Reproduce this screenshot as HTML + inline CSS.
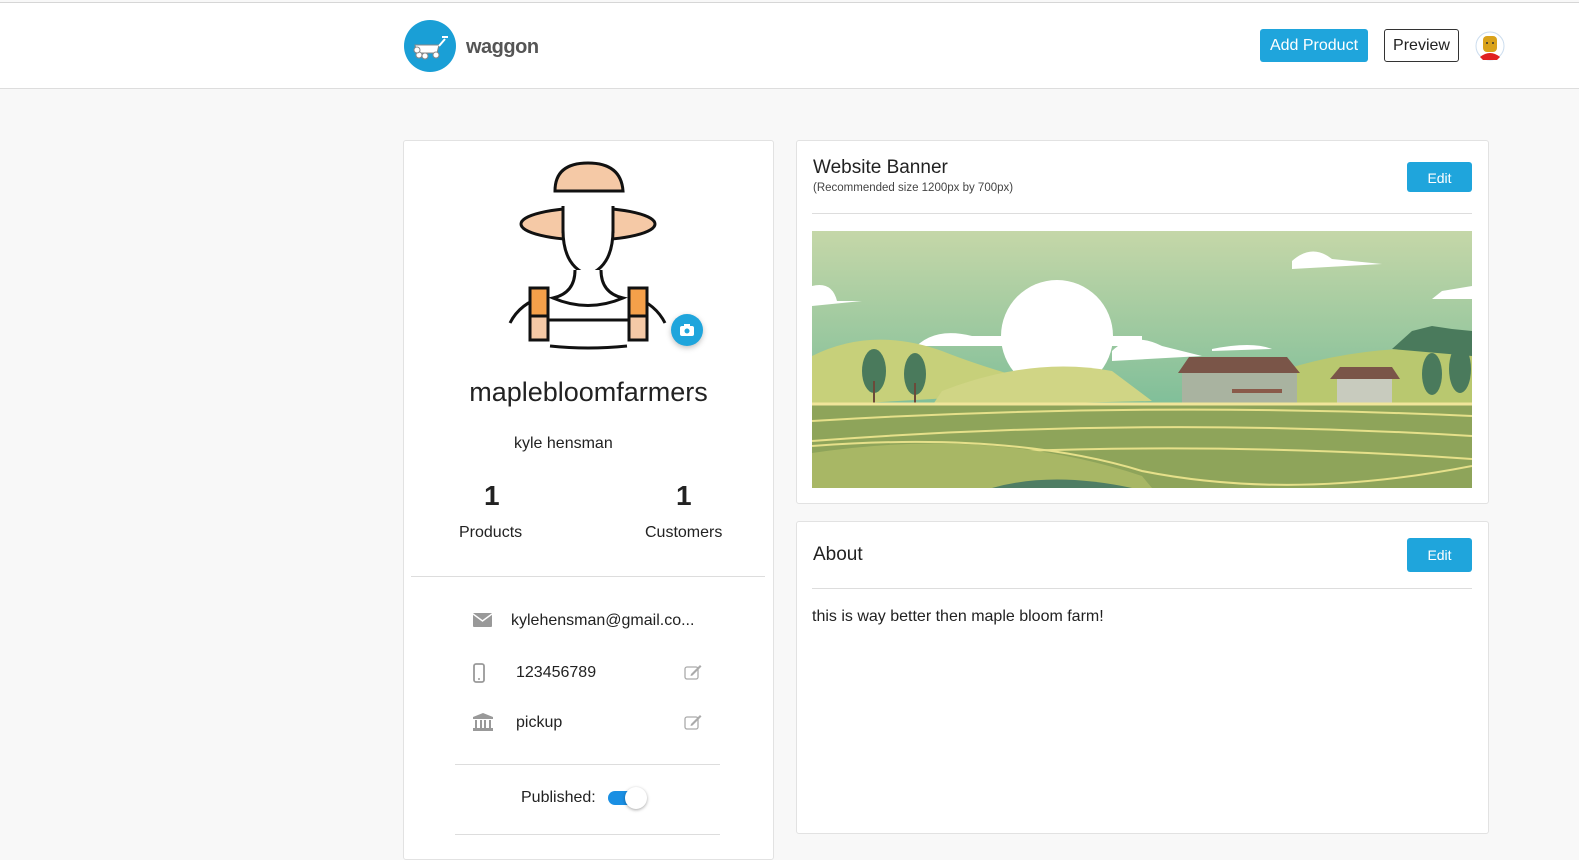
<!DOCTYPE html>
<html><head><style>
*{box-sizing:border-box;margin:0;padding:0}
body{width:1579px;height:847px;overflow:hidden;background:#f8f8f8;font-family:"Liberation Sans",sans-serif;color:#222;position:relative}
.abs{position:absolute}
.hdr{left:0;top:2px;width:1579px;height:87px;background:#fff;border-top:1px solid #d6d6d6;border-bottom:1px solid #ddd}
.card{background:#fff;border:1px solid #e2e2e2;border-radius:3px}
.btn{background:#1fa5dc;color:#fff;border-radius:3px;text-align:center}
.t{white-space:nowrap}
</style></head><body>
<div class="abs hdr"></div>
<svg class="abs" style="left:403px;top:19px" width="54" height="54" viewBox="0 0 54 54">
<circle cx="27" cy="27" r="26" fill="#1a9fd6"/>
<path d="M12 26 L36 26 L34 34 L14 34 Z" fill="#fff" stroke="#888" stroke-width="1"/>
<path d="M36 27 L42 20 M39 18 L45 18" stroke="#fff" stroke-width="2"/>
<circle cx="16" cy="36" r="3" fill="#fff" stroke="#888"/><circle cx="22" cy="37" r="3" fill="#fff" stroke="#888"/>
<circle cx="33" cy="36" r="3" fill="#fff" stroke="#888"/><circle cx="14" cy="31" r="3" fill="#fff" stroke="#888"/>
</svg>
<div class="abs t" style="left:466px;top:36px;font-size:20px;font-weight:bold;color:#555;letter-spacing:-0.5px">waggon</div>
<div class="abs btn t" style="left:1260px;top:29px;width:108px;height:33px;line-height:33px;font-size:16px">Add Product</div>
<div class="abs t" style="left:1384px;top:29px;width:75px;height:33px;line-height:31px;font-size:16px;border:1px solid #333;border-radius:3px;text-align:center">Preview</div>
<svg class="abs" style="left:1475px;top:31px" width="30" height="30" viewBox="0 0 30 30">
<circle cx="15" cy="15" r="14" fill="#fff" stroke="#cde" stroke-width="1"/>
<path d="M5 26 Q15 18 25 26 L22 29 L8 29 Z" fill="#e02020"/>
<rect x="8" y="5" width="14" height="16" rx="4" fill="#d9a21b"/>
<circle cx="12" cy="12" r="1" fill="#333"/><circle cx="18" cy="12" r="1" fill="#333"/>
</svg>

<div class="abs card" style="left:403px;top:140px;width:371px;height:720px"></div>
<svg class="abs" style="left:505px;top:158px" width="170" height="195" viewBox="0 0 170 195">
<path d="M50 33 Q50 5 83 5 Q116 5 118 33 Z" fill="#f5c9a6" stroke="#111" stroke-width="3"/>
<ellipse cx="83" cy="66" rx="67" ry="16" fill="#f5c9a6" stroke="#111" stroke-width="3"/>
<path d="M58 50 L108 50 L108 72 Q108 108 83 117 Q58 108 58 72 Z" fill="#fff" stroke="#111" stroke-width="3"/>
<rect x="58" y="48" width="50" height="10" fill="#fff"/>
<path d="M58 48 L58 75 M108 48 L108 75" stroke="#111" stroke-width="3"/>
<path d="M70 112 Q70 135 48 140 Q83 155 118 140 Q96 135 96 112" fill="#fff" stroke="#111" stroke-width="3"/>
<path d="M5 165 Q15 145 40 138 M160 165 Q150 145 126 138" fill="none" stroke="#111" stroke-width="3"/>
<rect x="25" y="130" width="18" height="52" fill="#f5a04a" stroke="#111" stroke-width="3"/>
<rect x="25" y="158" width="18" height="24" fill="#f5c9a6" stroke="#111" stroke-width="3"/>
<rect x="124" y="130" width="18" height="52" fill="#f5a04a" stroke="#111" stroke-width="3"/>
<rect x="124" y="158" width="18" height="24" fill="#f5c9a6" stroke="#111" stroke-width="3"/>
<path d="M43 162 L124 162" stroke="#111" stroke-width="3"/>
<path d="M45 188 Q83 192 122 188" stroke="#111" stroke-width="3" fill="none"/>
</svg>
<div class="abs" style="left:671px;top:314px;width:32px;height:32px;border-radius:50%;background:#1fa5dc;box-shadow:0 2px 6px rgba(0,0,0,.25)"></div>
<svg class="abs" style="left:679px;top:322px" width="16" height="16" viewBox="0 0 16 16"><rect x="1" y="4" width="14" height="10" rx="2" fill="#fff"/><rect x="5" y="2" width="6" height="3" fill="#fff"/><circle cx="8" cy="9" r="2.5" fill="#1fa5dc"/></svg>
<div class="abs t" style="left:403px;top:377px;width:371px;text-align:center;font-size:27px;color:#222">maplebloomfarmers</div>
<div class="abs t" style="left:514px;top:435px;font-size:16px">kyle hensman</div>
<div class="abs t" style="left:484px;top:480px;font-size:28px;font-weight:bold">1</div>
<div class="abs t" style="left:676px;top:480px;font-size:28px;font-weight:bold">1</div>
<div class="abs t" style="left:459px;top:524px;font-size:16px">Products</div>
<div class="abs t" style="left:645px;top:524px;font-size:16px">Customers</div>
<div class="abs" style="left:411px;top:576px;width:354px;height:1px;background:#ddd"></div>
<svg class="abs" style="left:473px;top:613px" width="19" height="14" viewBox="0 0 19 14"><rect width="19" height="14" rx="1" fill="#999"/><path d="M0 1 L9.5 8 L19 1" fill="none" stroke="#fff" stroke-width="1.5"/></svg>
<div class="abs t" style="left:511px;top:612px;font-size:16px">kylehensman@gmail.co...</div>
<svg class="abs" style="left:473px;top:663px" width="12" height="20" viewBox="0 0 12 20"><rect x="1" y="1" width="10" height="18" rx="2" fill="none" stroke="#999" stroke-width="1.8"/><circle cx="6" cy="16" r="1" fill="#999"/></svg>
<div class="abs t" style="left:516px;top:664px;font-size:16px">123456789</div>
<svg class="abs" style="left:473px;top:713px" width="20" height="18" viewBox="0 0 20 18"><path d="M10 0 L20 4 L0 4 Z" fill="#999"/><rect x="0" y="4" width="20" height="2" fill="#999"/><rect x="2" y="7" width="2" height="8" fill="#999"/><rect x="7" y="7" width="2" height="8" fill="#999"/><rect x="11" y="7" width="2" height="8" fill="#999"/><rect x="16" y="7" width="2" height="8" fill="#999"/><rect x="0" y="15" width="20" height="3" fill="#999"/></svg>
<div class="abs t" style="left:516px;top:714px;font-size:16px">pickup</div>
<svg class="abs" style="left:684px;top:664px" width="18" height="16" viewBox="0 0 18 16"><rect x="1" y="3" width="13" height="12" rx="2" fill="none" stroke="#aaa" stroke-width="1.3"/><path d="M7 10 L16 1 L17.5 2.5 L8.5 11.5 L6.5 12 Z" fill="#aaa"/></svg>
<svg class="abs" style="left:684px;top:714px" width="18" height="16" viewBox="0 0 18 16"><rect x="1" y="3" width="13" height="12" rx="2" fill="none" stroke="#aaa" stroke-width="1.3"/><path d="M7 10 L16 1 L17.5 2.5 L8.5 11.5 L6.5 12 Z" fill="#aaa"/></svg>
<div class="abs" style="left:455px;top:764px;width:265px;height:1px;background:#ddd"></div>
<div class="abs t" style="left:521px;top:789px;font-size:16px">Published:</div>
<div class="abs" style="left:608px;top:791px;width:30px;height:14px;border-radius:7px;background:#1a8fe3"></div>
<div class="abs" style="left:625px;top:787px;width:22px;height:22px;border-radius:50%;background:#fff;box-shadow:0 1px 3px rgba(0,0,0,.35)"></div>
<div class="abs" style="left:455px;top:834px;width:265px;height:1px;background:#ddd"></div>

<div class="abs card" style="left:796px;top:140px;width:693px;height:364px"></div>
<div class="abs t" style="left:813px;top:157px;font-size:19px;color:#222">Website Banner</div>
<div class="abs t" style="left:813px;top:182px;font-size:11.5px;color:#444">(Recommended size 1200px by 700px)</div>
<div class="abs btn t" style="left:1407px;top:162px;width:65px;height:30px;line-height:33px;font-size:14px">Edit</div>
<div class="abs" style="left:812px;top:213px;width:660px;height:1px;background:#ddd"></div>
<svg class="abs" style="left:812px;top:231px" width="660" height="257" viewBox="0 0 660 257">
<defs><linearGradient id="sky" x1="0" y1="0" x2="0" y2="1"><stop offset="0" stop-color="#c5d7a8"/><stop offset="1" stop-color="#5fb392"/></linearGradient></defs>
<rect width="660" height="257" fill="url(#sky)"/>
<circle cx="245" cy="105" r="56" fill="#fff"/>
<path d="M0 55 Q20 50 25 70 L50 70 L0 75 Z M100 120 Q120 95 160 105 L330 105 L330 115 L100 115 Z M300 120 Q320 100 350 115 L390 125 L300 130Z M480 30 Q500 12 520 28 L570 33 L480 38 Z M400 118 Q440 110 460 118 L400 120Z M630 60 L660 55 L660 68 L620 68Z" fill="#fff"/>
<path d="M0 125 Q60 95 130 120 Q180 140 260 160 L0 175 Z" fill="#c7d07a"/>
<path d="M130 160 Q220 125 300 140 L340 170 L120 175 Z" fill="#d0d585"/>
<path d="M420 160 Q520 110 660 118 L660 175 L400 175 Z" fill="#b9c86f"/>
<path d="M580 118 L600 100 L620 95 L640 98 L660 100 L660 125 Z" fill="#4a7a5c"/>
<ellipse cx="62" cy="140" rx="12" ry="22" fill="#4a7a5c"/><rect x="61" y="150" width="2" height="25" fill="#6b4a3a"/>
<ellipse cx="103" cy="143" rx="11" ry="21" fill="#4a7a5c"/><rect x="102" y="152" width="2" height="22" fill="#6b4a3a"/>
<ellipse cx="620" cy="143" rx="10" ry="21" fill="#4a7a5c"/><ellipse cx="648" cy="138" rx="11" ry="24" fill="#4a7a5c"/>
<path d="M366 142 L377 126 L475 126 L488 142 Z" fill="#7a5548"/>
<rect x="370" y="142" width="115" height="33" fill="#a9b3a0"/>
<path d="M420 160 L470 160" stroke="#8a5a4a" stroke-width="4"/>
<path d="M518 148 L528 136 L580 136 L588 148 Z" fill="#7a5548"/>
<rect x="525" y="148" width="55" height="27" fill="#c8cbbe"/>
<rect x="0" y="173" width="660" height="84" fill="#8ea45a"/>
<path d="M0 173 L660 173" stroke="#f0e59a" stroke-width="3"/>
<g stroke="#e6e08a" stroke-width="2" fill="none">
<path d="M0 190 Q330 170 660 185"/><path d="M0 210 Q330 185 660 205"/><path d="M0 232 Q330 205 660 228"/>
<path d="M0 215 Q200 200 330 240 Q480 270 660 235"/>
</g>
<path d="M0 257 L0 222 Q180 195 330 245 L340 257 Z" fill="#a8b765"/>
<path d="M180 257 Q240 240 320 257 Z" fill="#4f7d64"/>
</svg>

<div class="abs card" style="left:796px;top:521px;width:693px;height:313px"></div>
<div class="abs t" style="left:813px;top:544px;font-size:19px">About</div>
<div class="abs btn t" style="left:1407px;top:538px;width:65px;height:34px;line-height:35px;font-size:14px">Edit</div>
<div class="abs" style="left:812px;top:588px;width:660px;height:1px;background:#ddd"></div>
<div class="abs t" style="left:812px;top:608px;font-size:16px">this is way better then maple bloom farm!</div>
</body></html>
